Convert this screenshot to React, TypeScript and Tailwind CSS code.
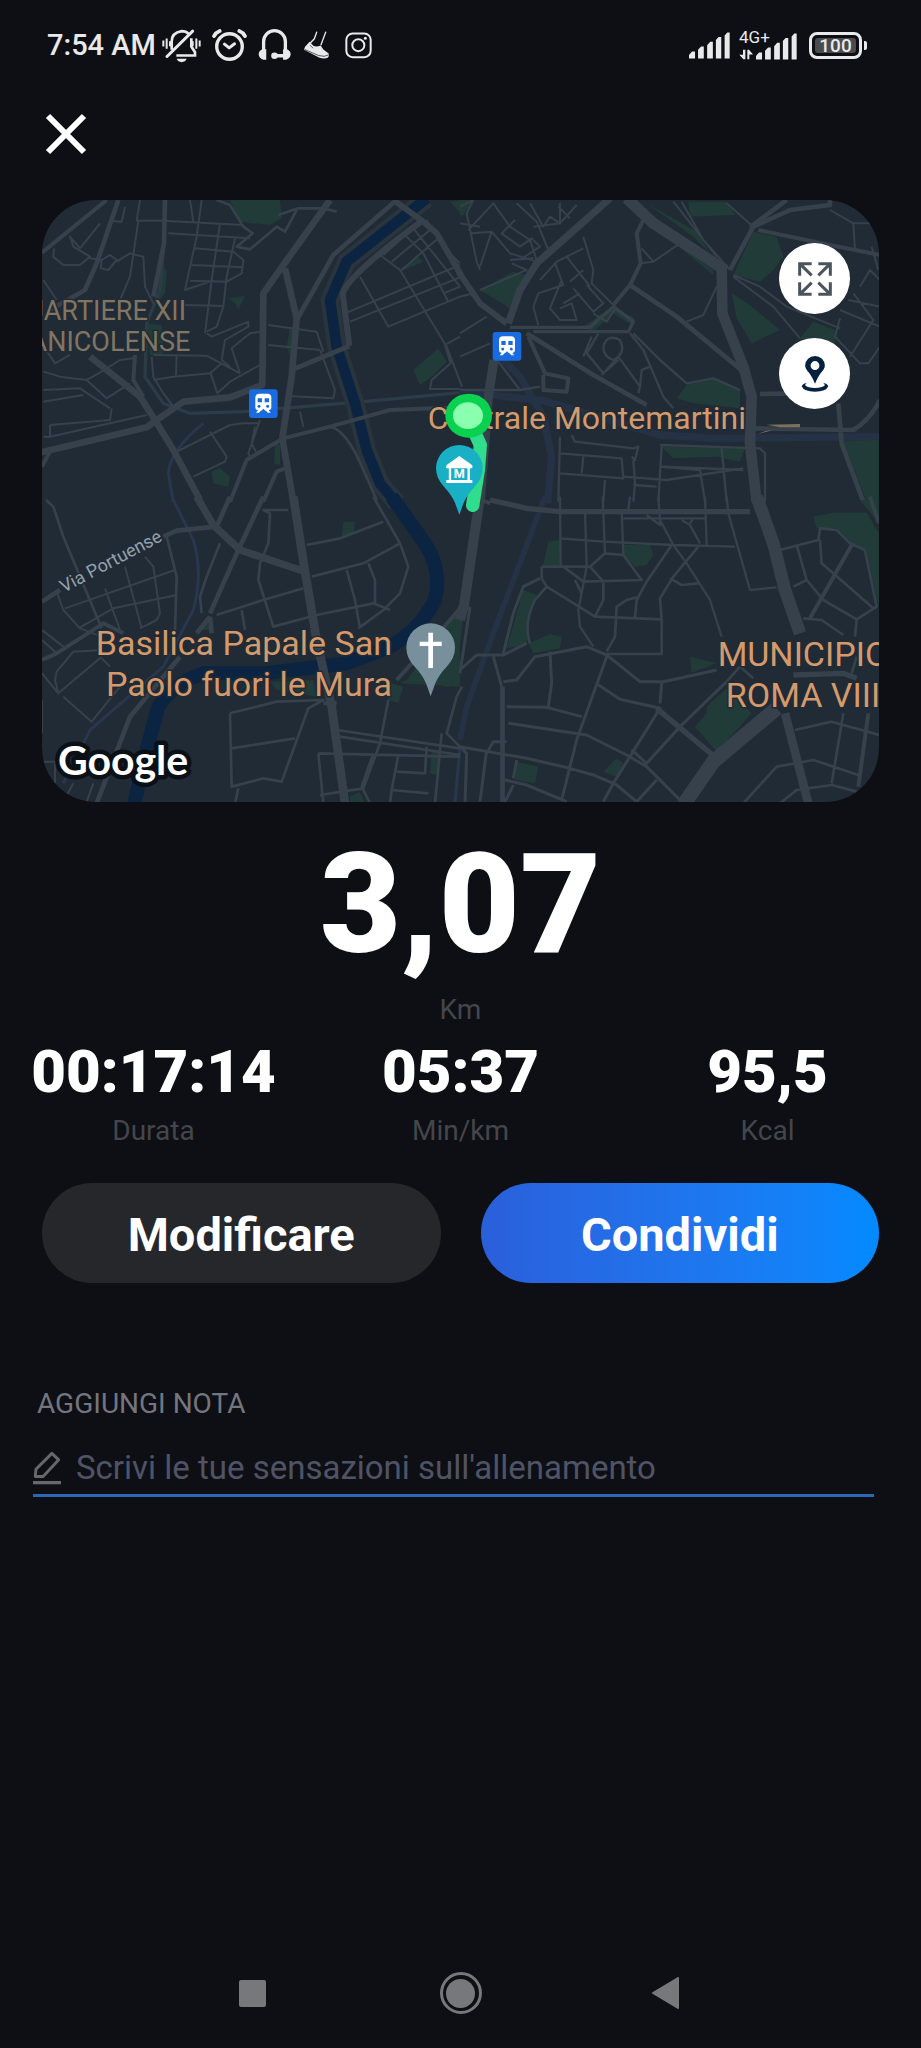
const STATS = [
  { value: "00:17:14", label: "Durata" },
  { value: "05:37", label: "Min/km" },
  { value: "95,5", label: "Kcal" },
];

type Street = { w: number; d: string };

const NORTH_WEST: Street[] = [
  { w: 20, d: "M30 788L350 712L380 690L460 635L600 622L697 585L700 310L760 225L900 30" },
  { w: 20, d: "M180 500L330 620L375 690L430 780L510 930" },
  { w: 20, d: "M765 235L800 385L785 560L757 745L790 935" },
  { w: 12, d: "M36 188L230 30M315 495L310 570L340 620M36 830L62 780" },
  { w: 14, d: "M265 30L200 220L165 300L60 360M405 30L402 160L370 320" },
  { w: 14, d: "M800 390L910 195L1100 30M785 540L958 468" },
  { w: 18, d: "M958 468L938 310Q960 250 1180 90M1090 30L1180 95L1220 130L1296 260" },
  { w: 12, d: "M600 935L650 810L760 745L900 710L1080 660L1290 652M700 935L740 845L765 835" },
  { w: 8, d: "M900 710Q950 720 1000 840L1040 930M745 75L805 55L880 55L920 65M560 30L600 45L640 110L668 130L620 170L660 178L740 110L765 125L800 60" },
  {
    w: 6,
    d: "M410 92L320 92L330 30M325 92L300 260L270 330M240 92L275 95L285 50M72 175L70 200L100 225L150 225L180 200L130 170L120 140L150 175M150 175L210 100M180 205L215 210L240 195L260 210L235 240L212 235L215 210M260 215L300 190L340 200L345 290L370 340M40 270L80 330M480 30L490 95M515 30L500 140L465 300L540 275M415 130L660 145M400 92L640 105M570 100L545 270L525 430M615 145L590 260L580 350L560 410L530 425M495 175L610 185L640 210L635 250L590 275L480 272M485 225L640 232M460 345L580 348M530 430L545 440L655 395L655 410L585 450L575 510L600 530M690 425L660 430L605 475L630 550M715 405L860 425L880 485M715 465L870 480M870 480L915 600L910 625L770 618M690 525L600 575L562 610L542 550L430 560L370 570M440 495L438 555M370 495L530 497L630 550M365 500L370 560L400 610L430 650M575 520L540 550M45 475L75 520L120 495M170 570L230 625L300 580M40 545L90 560L170 570M40 600L150 595L240 655M40 635L160 615M60 705L240 690L245 655M40 740L60 740L60 705M60 740L350 675M310 505L270 510L215 545L170 570M430 790L600 705L640 700L690 700M540 725L590 800L585 815L490 860M810 665L820 710M675 710L665 760L680 790M690 690L655 790L660 800",
  },
  {
    w: 6,
    d: "M990 260L1075 410L1290 320M1050 195L1110 240L1250 470L1296 590M1120 130L1180 190L1255 335M1150 115L1290 290M1190 90L1250 180L1290 220M945 370L1290 225M960 395L1290 262M1060 195L1165 100M1085 215L1200 120M1115 240L1230 140M1290 440L1245 465L1262 520L1205 570L1200 597L1290 597M1240 310L1290 290",
  },
];

const NORTH_EAST: Street[] = [
  { w: 34, d: "M500 25L580 100L795 240" },
  { w: 32, d: "M785 230L787 370L850 530L875 620L870 760L890 935" },
  { w: 22, d: "M450 25L230 220L180 300L145 400" },
  { w: 18, d: "M-5 245L60 340L140 400" },
  { w: 28, d: "M102 510L85 620L60 935" },
  { w: 14, d: "M200 430L400 555L560 645M880 110L810 240M870 112L980 30M880 110L990 60L1110 45L1110 25M510 285L650 380L850 545M880 715L1180 720Q1230 690 1260 630M1135 640L1145 760L1210 935M900 612L1010 610" },
  { w: 12, d: "M550 90L530 130L542 220L510 285L460 345M895 120L1110 165L1260 195M205 440L255 550L325 565L320 605L250 600L250 555" },
  { w: 10, d: "M150 412L390 412L460 350L520 395L505 425L220 425" },
  {
    w: 6,
    d: "M0 50L40 30L20 70L50 215L60 240M25 120L100 40L150 110L210 150L230 210M35 130L95 125L150 190L230 215M0 100L60 110M95 125L60 230M170 40L230 95L265 180M210 40L250 110L270 80L300 100L300 40M150 210L220 205M165 90L125 130L180 170L215 145L240 170L180 210M220 110L300 100L350 45M295 50L330 85M60 300L200 240L155 220M0 430L80 380M0 500L90 460M0 320L40 310",
  },
  {
    w: 6,
    d: "M370 140L400 240L395 280L460 345M370 175L290 215L240 270M285 220L310 285L235 310L220 350L235 405M320 200L390 290M330 275L370 240M305 270L270 355L300 390L350 390L335 340L300 355M340 295L400 365L430 340L380 285M400 370L440 395L470 350M310 340L360 310M540 220L580 215L660 160M545 175L580 215M770 290L730 375L680 395M665 35L730 150L810 240M640 35L770 200M800 40L880 110M820 255L900 290L980 350L1140 415M820 260L940 350L1020 445M1140 360L1260 410M1140 385L1125 440L1200 520L1225 520L1260 470M1165 330L1260 350M1180 310L1240 390L1170 500M1200 290L1230 240L1260 270M1110 60L1180 100L1260 100M1180 100L1185 180M1235 170L1255 240",
  },
  {
    w: 7,
    d: "M415 430L380 490L430 550L475 500L540 590L535 610M510 430L550 480L610 620L640 655M475 510L425 555M370 500L395 440M430 470Q440 430 480 450Q500 490 460 510Q430 500 430 470M520 430L600 510L680 580L760 565L840 600M540 590L545 540L570 530M115 515L180 600M0 600L180 600L240 590",
  },
  {
    w: 7,
    d: "M300 740L295 935M335 735L345 755L520 775L535 770L525 810L515 800M300 790L485 805L490 865L300 850M370 800L365 850M435 870L430 935M520 810L525 880L520 935M605 770L595 935M600 765L900 775L915 790L915 935M600 830L720 840L735 935M490 860L620 870L850 835M785 775L800 935M610 830L850 840M520 885L590 890",
  },
];

const SOUTH_WEST: Street[] = [
  { w: 22, d: "M500 -10L550 75L630 150L825 215" },
  { w: 26, d: "M790 -10L825 215L860 420L905 620L945 910" },
  { w: 14, d: "M600 -10L560 80L440 92L400 110M36 305L90 270M700 -10L625 150L540 340M540 350L500 400M540 350L545 400M450 470L300 650L200 910" },
  { w: 12, d: "M1290 325L1200 430L1100 540M36 480L80 460L220 370L280 400M880 610L920 610" },
  {
    w: 8,
    d: "M48 0L70 20L100 110L215 385M1030 -10L1110 130L1135 200L1110 280L1060 330L985 385M1110 130L1000 190L845 230M1060 65L930 115L830 135M775 30L700 30L720 40L715 130L690 190L685 240L730 380L860 345L1030 310L1080 330M570 130L530 230L510 290L515 340M560 345L700 300L820 265M635 330L645 390M410 110L440 230L435 390M950 210L975 300L990 385M1015 190L1035 240L1035 310",
  },
  {
    w: 6,
    d: "M80 275L100 330L150 385L215 410M105 325L435 210M145 385L250 325L440 285M225 265L270 390M285 200L335 385M345 170L370 200L390 340L380 360L330 385M36 390L100 440M36 420L80 460M36 520L85 580L215 470M85 580L75 540L80 515L130 455L215 450M100 590L185 665L270 560M215 475L240 500M36 600L36 700M36 785L75 785L75 850M170 905L190 850M100 905L130 850",
  },
  {
    w: 8,
    d: "M600 640L740 605L880 600L835 625L755 845L700 835L605 860L600 640M605 745L795 715M625 865L615 910M920 690L1290 745M930 710L1290 765M1075 600L1050 730L1000 865L870 885M865 760L1290 770M865 760L880 910M1030 760L995 860L1020 910M1105 765L1085 870L1195 880M1190 740L1185 820L1100 815M1235 700L1215 910M1290 740L1250 700L1280 590L1296 560M1085 870L1080 910",
  },
];

const SOUTH_EAST: Street[] = [
  { w: 30, d: "M60 -10L10 330M10 320L0 360" },
  { w: 38, d: "M890 -10L940 130L975 270L1020 400" },
  { w: 44, d: "M950 625L760 785L670 915" },
  { w: 26, d: "M975 640L1045 910" },
  { w: 16, d: "M1000 525L1150 520L1190 535M590 625L770 775M90 0L200 25L300 35L870 35" },
  { w: 12, d: "M65 0L90 10M1230 -10L1257 70M1175 135L1050 355M1225 640L1195 860" },
  {
    w: 9,
    d: "M0 740L200 775L330 805L400 825L470 855L530 905M440 470L350 720L305 900M100 470L125 560L125 910M130 560L130 910M135 840L200 855L320 905M80 750L60 905M0 740L20 760L15 910M85 750L100 725L140 725M30 320L0 520M0 510L50 465L130 465L200 430M130 460L160 340L190 260L240 235M270 455L275 550L265 620M130 545L170 540L225 470L380 440L440 465L540 545L610 545L770 510M140 620L260 622L365 650M145 670L380 705L500 765L560 800L660 900M408 550L480 598L600 625L460 850L430 905M605 550L600 610M660 680L560 790L515 750M800 545L660 680M590 840L530 905M170 780L160 835M160 855L135 905",
  },
  {
    w: 7,
    d: "M300 -10L302 200M300 115L430 125L640 135L825 140M375 35L380 200L355 330L360 380L400 440M428 -10L435 160M485 35L490 165M490 55L740 55M510 -10L505 30M595 -10L600 60L640 135L680 190L750 300L785 410M735 -10L740 135M560 45L600 75L600 50M665 60L690 75L720 130M800 -10L805 40L870 270L950 262M690 70L700 55",
  },
  {
    w: 8,
    d: "M245 200L390 200L435 160L490 165L545 240L370 245L310 200M245 200L245 235L260 260L405 350L605 358L605 462L440 462M345 240L365 280M390 200L430 245L430 300L405 350M635 135L560 245L530 300L525 355M530 292L500 300L470 320L465 410L440 455M715 140L640 230L600 295L605 358M630 235L665 255L715 250M260 260L225 300Q190 370 210 430",
  },
  {
    w: 8,
    d: "M960 150L1075 120L1080 85L1130 90L1170 130L1215 150L1250 320L1190 358L1090 300L1040 240L1010 135M1000 260L1040 240M1080 120L1085 190L1240 325M1190 360L1185 410M1030 355L1085 360L1150 405M1175 520L1190 470M1005 690L1115 665L1257 705M1150 640L1115 850M850 910L950 800L1060 780L1195 825M960 910L1010 870L1115 855L1190 875M840 500L880 535M840 500L800 545",
  },
];

const PARKS = {
  northWest:
    "M600 30L750 30L755 85L720 105L630 95ZM390 220L410 240L405 310L380 340ZM595 325L645 318L625 360L615 340ZM1110 245L1160 195L1180 215ZM1150 540L1225 475L1250 515L1205 560L1170 585ZM1260 35L1296 30L1296 75ZM735 760L750 765L750 825L732 820ZM545 845L570 835L600 860L595 890L550 880ZM780 415L790 415L780 495L770 470ZM975 760L1010 860L990 820ZM350 400L395 405L400 495L360 495Z",
  northEast:
    "M60 300L160 245L200 255L150 355ZM0 30L40 30L10 75L0 75ZM685 35L800 35L825 75L690 80ZM560 40L710 125L750 190L700 140ZM650 165L760 240L760 255ZM820 255L880 125L950 140L970 200L940 240L900 275ZM815 310L870 345L960 420L875 460L830 385ZM1020 445L1060 395L1125 420L1125 465L1080 470ZM650 625L680 585L770 565L840 600L840 655L700 640ZM605 770L855 775L840 815L770 800L640 805ZM1150 755L1257 745L1257 935L1220 935ZM370 410L455 350L525 385L515 405L460 370L400 425Z",
  southWest:
    "M940 65L975 65L970 100L935 110ZM720 545L850 540L860 590L740 570ZM1130 540L1290 330L1290 560L1110 550ZM1085 550L1120 560L1105 610L1075 600ZM1205 750L1230 750L1220 825L1200 820ZM960 890L990 875L1005 910L960 910ZM510 390L530 360L540 390Z",
  southEast:
    "M265 125L300 120L302 200L250 195ZM490 135L570 135L580 165L560 195L525 200L490 165ZM190 270L230 285L205 350L200 435L140 445ZM205 430L270 403L305 410L300 445L220 460ZM690 470L770 490L695 518ZM705 680L740 640L740 620L800 565L875 640L770 755ZM170 785L235 800L225 850L165 840ZM430 815L470 775L490 790L470 830ZM1060 50L1120 38L1220 38L1257 100L1257 320L1240 250L1220 150L1170 125L1130 85L1070 85ZM1200 0L1257 0L1257 70ZM-20 360L10 350L-10 520L-30 560L-50 560Z",
};

function Streets({ streets }: { streets: Street[] }) {
  return (
    <g fill="none" stroke="#37414c" strokeLinejoin="round">
      {streets.map((s) => (
        <path key={s.d} d={s.d} strokeWidth={s.w} />
      ))}
    </g>
  );
}

function Station({ x, y }: { x: number; y: number }) {
  return (
    <g transform={`translate(${x} ${y})`}>
      <rect width="86" height="86" rx="9" fill="#1a6be0" />
      <path d="M31 13H55Q67 13 67 25V55Q67 62 59 63L65 70H56L51 64H49L43 58L37 64H35L30 70H21L27 63Q19 62 19 55V25Q19 13 31 13Z" fill="#fff" />
      <path d="M26 27H39V39H26ZM47 27H60V39H47Z" fill="#1a6be0" />
      <circle cx="30" cy="51" r="4.500" fill="#1a6be0" />
      <circle cx="56" cy="51" r="4.500" fill="#1a6be0" />
    </g>
  );
}

function RouteMap() {
  return (
    <svg viewBox="0 0 837 602" className="block w-full font-[Roboto,sans-serif]" role="img" aria-label="Mappa">
      <rect width="837" height="602" fill="#202b36" />
      <g transform="scale(0.33333)">
        <g transform="translate(-36 -30)">
          <path d={PARKS.northWest} fill="#213b38" />
          <path d="M400 180L390 300L350 400L345 560L400 640L480 670L640 665L1000 635L1290 608" fill="none" stroke="#2b3c46" strokeWidth="10" />
          <path d="M520 700Q420 780 415 850L430 935" fill="none" stroke="#293650" strokeWidth="9" />
          <path d="M1190 25L950 215L900 330L920 470L975 640L1010 780L1050 880L1100 940" fill="none" stroke="#2a343c" strokeWidth="56" />
          <path d="M1190 25L950 215L900 330L920 470L975 640L1010 780L1050 880L1100 940" fill="none" stroke="#0b2441" strokeWidth="32" />
          <Streets streets={NORTH_WEST} />
        </g>
        <g transform="translate(1254 -30)">
          <path d={PARKS.northEast} fill="#213b38" />
          <path d="M0 605L250 632L600 735L760 745L1257 740M130 510L180 560L250 680L275 800L262 940" fill="none" stroke="#253246" strokeWidth="22" />
          <Streets streets={NORTH_EAST} />
          <path d="M890 733L920 722L940 720ZM920 704L1020 702V712L960 712Z" fill="#7d715d" />
        </g>
        <g transform="translate(-36 900)">
          <path d={PARKS.southWest} fill="#213b38" />
          <path d="M1085 -10L1170 110Q1240 200 1215 300Q1170 390 1080 440L950 490L700 520L520 520Q430 550 385 620L350 750L312 915" fill="none" stroke="#0b2441" strokeWidth="42" />
          <path d="M430 0L490 120Q520 220 490 330L400 500L180 690L100 850M1275 910L1290 740" fill="none" stroke="#293650" strokeWidth="9" />
          <Streets streets={SOUTH_WEST} />
        </g>
        <g transform="translate(1254 900)">
          <path d={PARKS.southEast} fill="#213b38" />
          <path d="M255 -10L100 400L20 620L0 720" fill="none" stroke="#253246" strokeWidth="17" />
          <Streets streets={SOUTH_EAST} />
        </g>
      </g>

      <g fill="#827561" fontSize="27" textAnchor="middle" stroke="#202b36" strokeWidth="3" paintOrder="stroke">
        <text x="55" y="120">QUARTIERE XII</text>
        <text x="55" y="151">GIANICOLENSE</text>
      </g>
      <text transform="translate(22 393) rotate(-28)" fill="#93a0ad" fontSize="18" stroke="#202b36" strokeWidth="3" paintOrder="stroke">
        Via Portuense
      </text>
      <g fill="#d59a6c" fontSize="34" stroke="#202b36" strokeWidth="3" paintOrder="stroke">
        <text x="704" y="229" textAnchor="end" fontSize="32">Centrale Montemartini</text>
        <text x="350" y="455" textAnchor="end">Basilica Papale San</text>
        <text x="350" y="496" textAnchor="end">Paolo fuori le Mura</text>
        <text x="761" y="466" textAnchor="middle">MUNICIPIO</text>
        <text x="761" y="507" textAnchor="middle">ROMA VIII</text>
      </g>

      <g transform="scale(0.33333)">
        <Station x={621} y={568} />
        <Station x={1352} y={396} />
        <g transform="translate(1074 540)">
          <path d="M218 376L235 270L241 195L225 160" fill="none" stroke="#2fdd8c" strokeWidth="40" strokeLinecap="round" strokeLinejoin="round" />
          <path d="M178 404L165 368Q155 345 132 320Q108 295 108 265A70 70 0 0 1 248 265Q248 295 224 320Q201 345 191 368Z" fill="#19b0c6" />
          <path d="M178 228L217 256V265H139V256ZM139 300H217V309H139Z" fill="#fff" />
          <path d="M150 264V302M206 264V302" stroke="#fff" strokeWidth="7" />
          <text x="178" y="295" textAnchor="middle" fontSize="38" fontWeight="700" fill="#fff">M</text>
          <ellipse cx="206" cy="107" rx="70" ry="66" fill="#0bd150" />
          <ellipse cx="204" cy="107" rx="45" ry="40" fill="#8affae" />
        </g>
        <g transform="translate(-36 900)">
          <path d="M1202 589L1188 550Q1178 525 1154 500Q1129 473 1129 443A73 73 0 0 1 1275 443Q1275 473 1250 500Q1226 525 1216 550Z" fill="#78909c" />
          <path d="M1195 398H1209V425H1235V438H1209V504H1195V438H1169V425H1195Z" fill="#fff" />
        </g>
      </g>

      <text x="16" y="575" fontSize="41" fontWeight="700" fill="#fff" stroke="#0b1016" strokeWidth="9" strokeLinejoin="round" paintOrder="stroke" className="font-[Lato,sans-serif]">
        Google
      </text>
    </svg>
  );
}

function SignalBars() {
  return (
    <svg viewBox="0 0 122 80" className="h-[27px] w-[41px]" fill="#e9e9ea" aria-hidden="true">
      <path d="M0 79V68L9 58H18V79ZM27 79V53L36 43H44V79ZM54 79V39L63 29H71V79ZM80 79V24L88 15H96V79ZM106 79V10L114 1H121V79Z" />
    </svg>
  );
}

function StatusBar() {
  return (
    <div className="flex h-[90px] items-center justify-between pr-[54px] pl-[47px] text-[#e9e9ea]">
      <div className="flex items-center gap-[11px]">
        <span className="-mr-[5px] text-[29px] leading-9 font-medium">7:54 AM</span>
        <svg viewBox="484 82 117 104" className="h-[35px] w-[39px]" fill="none" stroke="currentColor" strokeWidth="8" aria-hidden="true">
          <path d="M488 119V137M498 113V144M508 121V136M576 121V136M587 113V144M597 119V137" strokeWidth="6" />
          <path d="M513 147V122Q513 96 543 91Q556 91 564 99" />
          <path d="M572 112V137L583 154V164H527" />
          <path d="M499 167L576 91" strokeLinecap="round" strokeWidth="9" />
          <path d="M528 174H558Q554 184 543 184Q532 184 528 174Z" fill="currentColor" stroke="none" />
        </svg>
        <svg viewBox="636 82 104 104" className="size-[35px]" fill="none" stroke="currentColor" aria-hidden="true">
          <circle cx="688" cy="137" r="38" strokeWidth="10" />
          <path d="M642 106Q648 95 659 91M717 91Q728 95 734 106" strokeWidth="11" strokeLinecap="round" />
          <path d="M673 130L687 141L703 129" strokeWidth="9" strokeLinecap="round" strokeLinejoin="round" />
        </svg>
        <svg viewBox="772 82 100 104" className="h-[35px] w-[33px]" fill="none" stroke="currentColor" strokeWidth="10" aria-hidden="true">
          <path d="M789 165V122A33 33 0 0 1 855 122V165M822 165H855" />
          <path d="M785 145H797V177H788Q774 172 774 160Q774 150 785 145ZM860 145H848V177H857Q871 172 871 160Q871 150 860 145Z" fill="currentColor" stroke="none" />
          <circle cx="822" cy="165" r="10" fill="currentColor" stroke="none" />
        </svg>
        <svg viewBox="912 82 90 104" className="h-[35px] w-[30px]" fill="none" stroke="currentColor" aria-hidden="true">
          <path d="M956 94L949 114L936 127M983 94L969 132" strokeWidth="4" strokeLinecap="round" />
          <path d="M935 123L946 135Q955 140 968 134L976 146L992 158Q995 166 989 171Q978 176 963 170L918 147L921 138Z" fill="currentColor" stroke="none" />
          <path d="M920 146L962 164Q980 170 992 162M936 133L945 142" stroke="#0d0f14" strokeWidth="2" />
        </svg>
        <svg viewBox="1036 82 90 104" className="h-[35px] w-[30px]" fill="none" stroke="currentColor" strokeWidth="6" aria-hidden="true">
          <rect x="1046" y="98" width="73" height="71" rx="19" />
          <circle cx="1082" cy="133" r="18" />
          <circle cx="1103" cy="112" r="4.500" fill="currentColor" stroke="none" />
        </svg>
      </div>

      <div className="flex items-center">
        <SignalBars />
        <div className="ml-[9px] flex items-end">
          <div className="relative h-[29px] w-[17px]">
            <span className="absolute -top-1 left-0 text-[17px] leading-5">4G+</span>
            <svg viewBox="0 0 42 32" className="absolute bottom-0 left-0 h-[11px] w-[14px]" fill="currentColor" aria-hidden="true">
              <path d="M12 2H19V30H13L1 17H12ZM25 2H30L42 16H31V30H25Z" />
            </svg>
          </div>
          <SignalBars />
        </div>
        <div className="ml-3 flex items-center gap-[2px]">
          <div className="flex h-[27px] w-[53px] items-center justify-center rounded-[8px] border-[3px] border-[#e9e9ea] p-[3px]">
            <span className="flex h-full w-full items-center justify-center rounded-[3px] bg-[#4a4b4f] text-[19px] leading-none font-medium">100</span>
          </div>
          <span className="h-[9px] w-[3px] rounded-r-[2px] bg-[#e9e9ea]" />
        </div>
      </div>
    </div>
  );
}

export default function App() {
  return (
    <div className="flex min-h-screen flex-col bg-[#0d0f14] font-[Roboto,sans-serif] text-white">
      <StatusBar />

      <header className="flex h-[110px] items-start px-[42px] pt-5">
        <button type="button" aria-label="Chiudi" className="flex size-12 items-center justify-center">
          <svg viewBox="0 0 48 48" className="size-12" stroke="#fff" strokeWidth="6" aria-hidden="true">
            <path d="M6 6L42 42M42 6L6 42" />
          </svg>
        </button>
      </header>

      <main className="flex flex-1 flex-col">
        <section className="relative mx-[42px] overflow-hidden rounded-[54px]">
          <RouteMap />
          <div className="absolute top-[43px] right-[29px] flex flex-col gap-6">
            <button type="button" aria-label="Schermo intero" className="flex size-[71px] items-center justify-center rounded-full bg-white">
              <svg viewBox="0 0 102 102" className="size-[34px]" fill="none" stroke="#4b535d" strokeWidth="9" aria-hidden="true">
                <path d="M5 41V5H41M5 5L41 40M61 5H97V41M97 5L61 40M5 61V97H41M5 97L41 62M61 97H97V61M97 97L61 62" />
              </svg>
            </button>
            <button type="button" aria-label="Posizione" className="flex size-[71px] items-center justify-center rounded-full bg-white">
              <svg viewBox="0 0 82 106" className="h-[36px] w-[28px]" aria-hidden="true">
                <path d="M41 82Q36 66 24 50Q12 38 12 28A29 28 0 0 1 70 28Q70 38 58 50Q46 66 41 82ZM41 15A13 13 0 1 0 41 41A13 13 0 1 0 41 15Z" fill="#06213d" fillRule="evenodd" />
                <path d="M18 79Q5 82 2 89Q8 105 41 105Q74 105 80 89Q77 82 64 79Q70 82 70 86Q62 94 41 94Q20 94 12 86Q12 82 18 79Z" fill="#06213d" />
              </svg>
            </button>
          </div>
        </section>

        <div className="mt-8 text-center">
          <p className="text-[140px] leading-[140px] font-black">3,07</p>
          <p className="mt-[18px] text-[28px] leading-9 text-[#45464b]">Km</p>
        </div>

        <div className="mt-3 grid grid-cols-3 text-center">
          {STATS.map((s) => (
            <div key={s.label}>
              <p className="text-[60px] leading-[64px] font-black">{s.value}</p>
              <p className="mt-[9px] text-[28px] leading-9 text-[#45464b]">{s.label}</p>
            </div>
          ))}
        </div>

        <div className="mt-[34px] grid grid-cols-2 gap-10 px-[42px]">
          <button type="button" className="h-[100px] rounded-full bg-[#26272b] pt-1 text-[47px] leading-[56px] font-bold">
            Modificare
          </button>
          <button type="button" className="h-[100px] rounded-full bg-linear-to-r from-[#2a5fdb] to-[#028aff] pt-1 text-[47px] leading-[56px] font-bold">
            Condividi
          </button>
        </div>

        <div className="mt-[103px] pr-[47px] pl-[33px]">
          <label htmlFor="note" className="block pl-1 text-[28px] leading-9 text-[#74767f]">
            AGGIUNGI NOTA
          </label>
          <div className="mt-6 flex items-center gap-[15px] border-b-[3px] border-[#2a68b4] pb-1">
            <svg viewBox="0 0 86 102" className="h-[34px] w-[28px] shrink-0" fill="none" stroke="#67686c" strokeWidth="9" strokeLinejoin="round" aria-hidden="true">
              <path d="M7 77L9 55L58 6L79 26L31 77Z" />
              <path d="M0 96H86" strokeWidth="10" />
            </svg>
            <input
              id="note"
              type="text"
              placeholder="Scrivi le tue sensazioni sull'allenamento"
              className="h-11 min-w-0 flex-1 bg-transparent text-[33px] leading-[44px] text-white outline-none placeholder:text-[#505366]"
            />
          </div>
        </div>
      </main>

      <nav className="flex h-[110px] items-center justify-center gap-[166px]">
        <button type="button" aria-label="App recenti" className="flex size-[42px] items-center justify-center">
          <span className="size-[27px] rounded-[2px] bg-[#77787c]" />
        </button>
        <button type="button" aria-label="Home" className="flex size-[42px] items-center justify-center rounded-full border-[3px] border-[#77787c]">
          <span className="size-[29px] rounded-full bg-[#77787c]" />
        </button>
        <button type="button" aria-label="Indietro" className="flex size-[42px] items-center justify-center">
          <svg viewBox="0 0 34 32" className="h-8 w-[34px]" aria-hidden="true">
            <path d="M1 16L26 1V31Z" fill="#77787c" stroke="#77787c" strokeWidth="2" strokeLinejoin="round" />
          </svg>
        </button>
      </nav>
    </div>
  );
}
